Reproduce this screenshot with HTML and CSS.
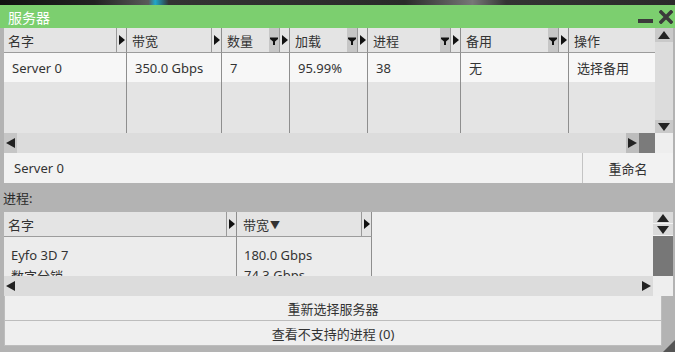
FILE: index.html
```html
<!DOCTYPE html>
<html lang="zh">
<head>
  <meta charset="UTF-8" />
  <title>服务器</title>
  <link rel="stylesheet" href="styles.css">
</head>
<body>
  <div class="backdrop"></div>
  <div class="window">
    <div class="titlebar">
      <span class="title">服务器</span>
      <div class="win-btns">
        <svg class="min-icon" width="15" height="4" viewBox="0 0 15 4"><rect width="15" height="4" fill="#3b3b3b"/></svg>
        <svg class="close-icon" width="14" height="14" viewBox="0 0 14 14"><path d="M2 2L12 12M12 2L2 12" stroke="#3b3b3b" stroke-width="3.6" stroke-linecap="square"/></svg>
      </div>
    </div>

    <div class="content">
      <div class="frame main-frame">
        <div class="grid main-grid">
          <div class="th"><span class="label">名字</span><span class="handle"></span></div>
          <div class="th"><span class="label">带宽</span><span class="handle"></span></div>
          <div class="th"><span class="label">数量</span><span class="filter"><svg width="8" height="8" viewBox="0 0 8 8"><path d="M0 0.5H8V2L5 4.5V8H3V4.5L0 2Z" fill="#111"/></svg></span><span class="handle"></span></div>
          <div class="th"><span class="label">加载</span><span class="filter"><svg width="8" height="8" viewBox="0 0 8 8"><path d="M0 0.5H8V2L5 4.5V8H3V4.5L0 2Z" fill="#111"/></svg></span><span class="handle"></span></div>
          <div class="th"><span class="label">进程</span><span class="filter"><svg width="8" height="8" viewBox="0 0 8 8"><path d="M0 0.5H8V2L5 4.5V8H3V4.5L0 2Z" fill="#111"/></svg></span><span class="handle"></span></div>
          <div class="th"><span class="label">备用</span><span class="filter"><svg width="8" height="8" viewBox="0 0 8 8"><path d="M0 0.5H8V2L5 4.5V8H3V4.5L0 2Z" fill="#111"/></svg></span><span class="handle"></span></div>
          <div class="th last"><span class="label">操作</span></div>

          <div class="td">Server 0</div>
          <div class="td">350.0 Gbps</div>
          <div class="td">7</div>
          <div class="td">95.99%</div>
          <div class="td">38</div>
          <div class="td">无</div>
          <div class="td last">选择备用</div>

          <div class="fill"></div>
          <div class="fill"></div>
          <div class="fill"></div>
          <div class="fill"></div>
          <div class="fill"></div>
          <div class="fill"></div>
          <div class="fill last"></div>
        </div>
        <div class="vscroll">
          <span class="sbtn"><i class="tri up"></i></span>
          <span class="track"></span>
          <span class="sbtn"><i class="tri down"></i></span>
        </div>
        <div class="hscroll">
          <span class="sbtn left-btn"><i class="tri left"></i></span>
          <span class="track"></span>
          <span class="sbtn right-btn"><i class="tri right"></i></span>
          <span class="thumb"></span>
        </div>
        <div class="corner"></div>
      </div>

      <div class="rename-row">
        <div class="name-input">Server 0</div>
        <div class="rename-btn">重命名</div>
      </div>

      <div class="section-label">进程:</div>

      <div class="frame proc-frame">
        <div class="grid proc-grid">
          <div class="th"><span class="label">名字</span><span class="handle"></span></div>
          <div class="th"><span class="label">带宽<small class="sort">▼</small></span><span class="handle"></span></div>
          <div class="blank"></div>

          <div class="td first-row">Eyfo 3D 7</div>
          <div class="td first-row">180.0 Gbps</div>
          <div class="td">数字分销</div>
          <div class="td">74.3 Gbps</div>
        </div>
        <div class="vscroll">
          <span class="sbtn"><i class="tri up"></i></span>
          <span class="sbtn"><i class="tri down"></i></span>
          <span class="thumb"></span>
        </div>
        <div class="hscroll">
          <span class="plain-arrow"><i class="tri left"></i></span>
          <span class="track"></span>
          <span class="plain-arrow"><i class="tri right"></i></span>
        </div>
        <div class="corner"></div>
      </div>

      <div class="wide-btn">重新选择服务器</div>
      <div class="wide-btn">查看不支持的进程 (0)</div>
    </div>
    <div class="grip"></div>
  </div>
</body>
</html>
```

FILE: styles.css
```css
body {
  margin: 0;
  width: 675px;
  height: 352px;
  overflow: hidden;
  font-family: "Noto Sans", "Noto Sans CJK SC", sans-serif;
  font-size: 13px;
  color: #333;
  background: #222;
}
.backdrop {
  height: 5px;
  background: linear-gradient(90deg, #111 0%, #222 14%, #5a5a5a 22%, #1fa7c9 23%, #333 25%, #2a2a2a 60%, #777 70%, #333 75%, #2a2a2a 100%);
}
.window {
  position: relative;
  height: 347px;
  background: #b3b3b3;
}
.titlebar {
  height: 23px;
  background: #7ccf6f;
  display: flex;
  align-items: center;
  justify-content: space-between;
  padding: 0 2px 0 8px;
}
.title {
  color: #fff;
  font-size: 14px;
}
.win-btns {
  display: flex;
  align-items: center;
  gap: 6px;
}
.min-icon {
  margin-top: 9px;
}
.content {
  padding-left: 4px;
  width: 669px;
}

/* table frames */
.frame {
  display: grid;
}
.main-frame {
  grid-template-columns: 651px 18px;
  grid-template-rows: 105px 20px;
}
.proc-frame {
  grid-template-columns: 649px 20px;
  grid-template-rows: 64px 20px;
}
.grid {
  display: grid;
  overflow: hidden;
}
.main-grid {
  grid-template-columns: 123px 95px 68px 78px 93px 108px 86px;
  grid-template-rows: 25px 29px 1fr;
}
.proc-grid {
  grid-template-columns: 233px 135px 281px;
  grid-template-rows: 25px 28px 22px;
  background: #efefef;
}
.th {
  display: flex;
  align-items: stretch;
  background: #e4e4e4;
  border-right: 1px solid #8e8e8e;
  border-bottom: 1px solid #9c9c9c;
  box-sizing: border-box;
}
.th .label {
  flex: 1;
  display: flex;
  align-items: center;
  padding-left: 4px;
  white-space: nowrap;
}
.main-grid .th:not(:first-child) .label {
  padding-left: 5px;
}
.sort {
  font-size: 10px;
  margin-left: 1px;
}
.filter {
  width: 10px;
  background: #c6c6c6;
  display: flex;
  justify-content: center;
  padding-top: 9px;
  box-sizing: border-box;
}
.handle {
  width: 9px;
  border-left: 1px solid #9a9a9a;
  display: flex;
  align-items: center;
  justify-content: center;
}
.handle::after {
  content: "";
  border-left: 6px solid #111;
  border-top: 5px solid transparent;
  border-bottom: 5px solid transparent;
}
.td {
  display: flex;
  align-items: center;
  padding-left: 8px;
  background: #f7f7f7;
  border-right: 1px solid #8e8e8e;
  white-space: nowrap;
}
.fill {
  background: #e4e4e4;
  border-right: 1px solid #8e8e8e;
}
.main-grid .last {
  border-right: none;
}
.proc-grid .blank {
  grid-row: span 3;
  background: #efefef;
}
.proc-grid .th:nth-child(2) .label {
  padding-left: 6px;
}
.proc-grid .td {
  background: #ececec;
  padding-left: 7px;
  align-items: flex-start;
  padding-top: 1px;
}
.proc-grid .td.first-row {
  padding-top: 9px;
  box-sizing: border-box;
}

/* scrollbars */
.vscroll {
  display: flex;
  flex-direction: column;
  background: #dcdcdc;
}
.vscroll .track {
  flex: 1;
}
.vscroll .sbtn {
  height: 14px;
  background: #c9c9c9;
  display: flex;
  align-items: center;
  justify-content: center;
}
.main-frame .vscroll .sbtn:last-child {
  height: 13px;
}
.proc-frame .vscroll .sbtn {
  height: 11px;
  background: #dadada;
  border-bottom: 1px solid #f2f2f2;
}
.proc-frame .vscroll .thumb {
  flex: 1;
  background: #777;
}
.hscroll {
  display: flex;
  align-items: stretch;
  background: #dcdcdc;
}
.hscroll .track {
  flex: 1;
}
.hscroll .sbtn {
  width: 13px;
  display: flex;
  align-items: center;
  justify-content: center;
}
.left-btn {
  background: #c6c6c6;
}
.right-btn {
  background: #bdbdbd;
}
.hscroll .thumb {
  width: 16px;
  background: #7b7b7b;
}
.plain-arrow {
  width: 13px;
  display: flex;
  align-items: center;
  justify-content: center;
}
.corner {
  background: #eeeeee;
}
.tri {
  display: block;
  width: 0;
  height: 0;
}
.tri.up {
  border-bottom: 8px solid #222;
  border-left: 6px solid transparent;
  border-right: 6px solid transparent;
}
.tri.down {
  border-top: 8px solid #222;
  border-left: 6px solid transparent;
  border-right: 6px solid transparent;
}
.tri.left {
  border-right: 9px solid #222;
  border-top: 5px solid transparent;
  border-bottom: 5px solid transparent;
}
.tri.right {
  border-left: 9px solid #222;
  border-top: 5px solid transparent;
  border-bottom: 5px solid transparent;
}

/* rename */
.rename-row {
  display: flex;
  height: 30px;
  background: #f2f2f2;
}
.name-input {
  flex: 1;
  display: flex;
  align-items: center;
  padding-left: 10px;
}
.rename-btn {
  width: 90px;
  border-left: 1px solid #c4c4c4;
  display: flex;
  align-items: center;
  justify-content: center;
}
.section-label {
  height: 29px;
  display: flex;
  align-items: center;
  margin-left: -1px;
  color: #2a2a2a;
}

.wide-btn {
  width: 658px;
  height: 25px;
  box-sizing: border-box;
  background: #efefef;
  border: 1px solid #bdbdbd;
  border-top: none;
  display: flex;
  align-items: center;
  justify-content: center;
}
.wide-btn:first-of-type {
  border-top: 1px solid #bdbdbd;
}
.grip {
  position: absolute;
  right: 0;
  bottom: 0;
  width: 0;
  height: 0;
  border-left: 12px solid transparent;
  border-bottom: 12px solid #555;
}
```
